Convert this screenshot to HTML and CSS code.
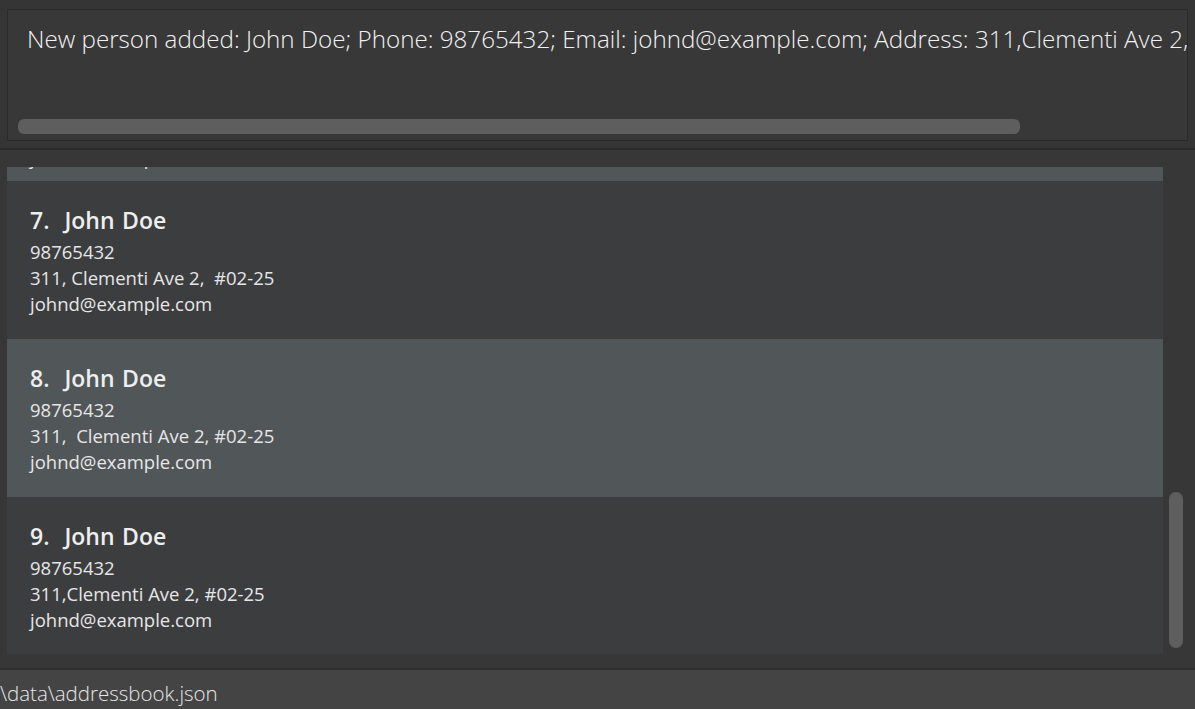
FILE: index.html
```html
<!DOCTYPE html>
<html>
<head>
<meta charset="utf-8">
<link rel="stylesheet" href="styles.css">
</head>
<body>
<div class="app">
  <div class="result-pane">
    <div class="result-box">
      <div class="result-text">New person added: John Doe; Phone: 98765432; Email: johnd@example.com; Address: 311,Clementi Ave 2, #02-25</div>
      <div class="hscroll"></div>
    </div>
  </div>
  <div class="list-pane">
    <div class="list-clip">
      <div class="card card-partial selected">
        <div class="name">6.  John Doe</div>
        <div class="line">98765432</div>
        <div class="line">311, Clementi Ave 2, #02-25</div>
        <div class="line">johnd@example.com</div>
      </div>
      <div class="card">
        <div class="name">7.  John Doe</div>
        <div class="line">98765432</div>
        <div class="line">311, Clementi Ave 2,  #02-25</div>
        <div class="line">johnd@example.com</div>
      </div>
      <div class="card selected">
        <div class="name">8.  John Doe</div>
        <div class="line">98765432</div>
        <div class="line">311,  Clementi Ave 2, #02-25</div>
        <div class="line">johnd@example.com</div>
      </div>
      <div class="card">
        <div class="name">9.  John Doe</div>
        <div class="line">98765432</div>
        <div class="line">311,Clementi Ave 2, #02-25</div>
        <div class="line">johnd@example.com</div>
      </div>
    </div>
    <div class="vtrack"><div class="vthumb"></div></div>
  </div>
  <div class="status-bar">
    <div class="status-text">\data\addressbook.json</div>
  </div>
</div>
</body>
</html>
```
FILE: styles.css
```css
html, body {
  margin: 0;
  padding: 0;
  background: #353535;
  width: 1195px;
  height: 709px;
  overflow: hidden;
}
.app {
  display: flex;
  flex-direction: column;
  height: 709px;
  font-family: "Open Sans", "Noto Sans", sans-serif;
}
.result-pane {
  height: 150px;
  flex: none;
  box-sizing: border-box;
  padding: 9px 7px 0 7px;
  background: #353535;
  border-bottom: 2px solid #2b2b2b;
}
.result-box {
  height: 132px;
  box-sizing: border-box;
  border: 1px solid #2a2a2a;
  background: #383838;
  position: relative;
  overflow: hidden;
}
.result-text {
  padding: 14px 0 0 19px;
  white-space: nowrap;
  color: #f2f2f2;
  font-size: 24.2px;
  font-weight: 300;
  line-height: 30px;
}
.hscroll {
  position: absolute;
  left: 10px;
  top: 109px;
  width: 1002px;
  height: 15px;
  border-radius: 6px;
  background: #5e5e5e;
}
.list-pane {
  height: 518px;
  flex: none;
  box-sizing: border-box;
  background: #373737;
  display: flex;
  padding-top: 17px;
  padding-left: 7px;
}
.list-clip {
  width: 1156px;
  height: 487px;
  overflow: hidden;
}
.card {
  height: 158px;
  box-sizing: border-box;
  padding: 22px 0 0 23px;
  background: #3c3d3f;
  color: #e8e8e8;
  overflow: hidden;
}
.card.selected {
  background: #515658;
}
.card-partial {
  margin-top: -144px;
  padding-top: 34px;
}
.name {
  height: 36px;
  line-height: 34px;
  font-size: 23px;
  font-weight: 600;
  word-spacing: 1.5px;
  white-space: pre;
  color: #eeeeee;
}
.line {
  height: 26px;
  line-height: 26px;
  font-size: 18.5px;
  white-space: pre;
  color: #e6e6e6;
}
.vtrack {
  width: 32px;
  position: relative;
}
.vthumb {
  position: absolute;
  left: 6px;
  top: 325px;
  width: 14px;
  height: 156px;
  border-radius: 7px;
  background: #5e5e5e;
}
.status-bar {
  flex: 1;
  background: #444444;
  border-top: 2px solid #2e2e2e;
  overflow: hidden;
}
.status-text {
  color: #e6e6e6;
  font-size: 20.5px;
  font-weight: 300;
  line-height: 36px;
  padding-top: 5px;
  white-space: nowrap;
}
```
